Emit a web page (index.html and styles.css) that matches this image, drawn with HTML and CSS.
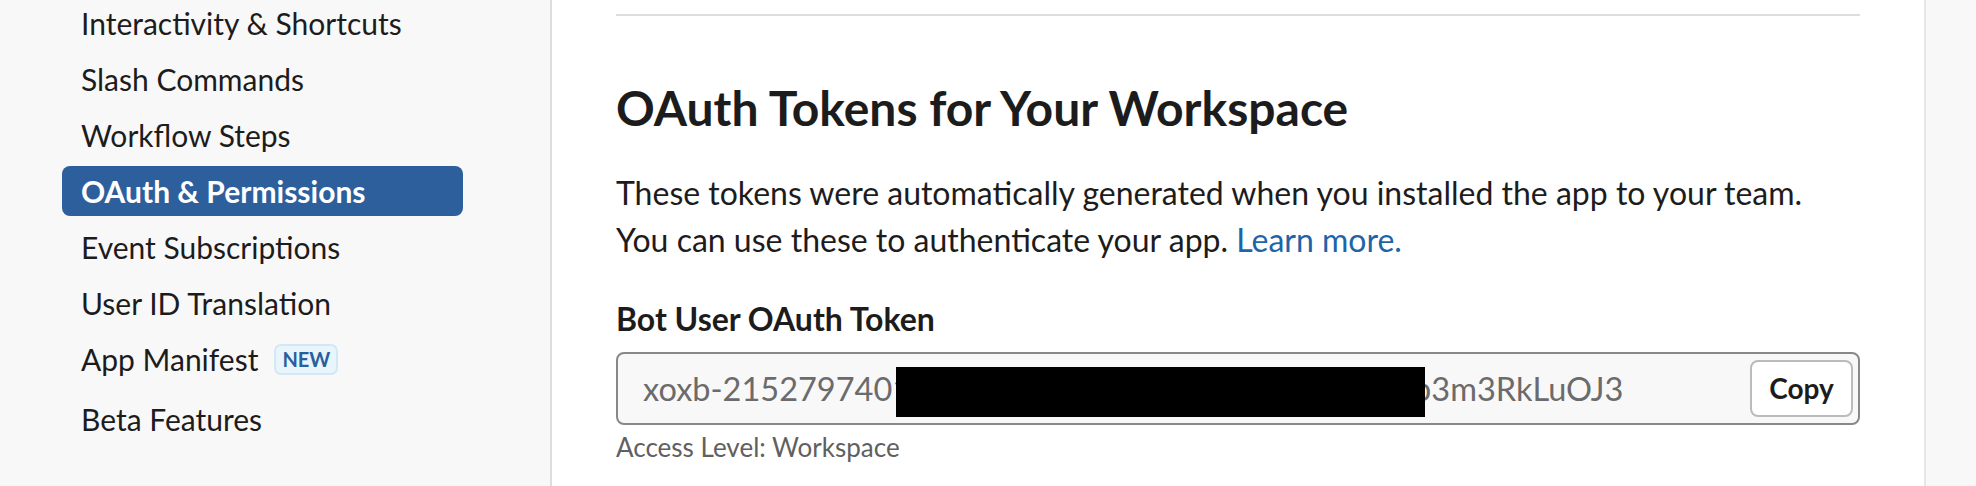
FILE: index.html
```html
<!DOCTYPE html>
<html lang="en">
<head>
  <meta charset="UTF-8" />
  <meta name="viewport" content="width=device-width, initial-scale=1.0"/>
  <title>OAuth &amp; Permissions</title>
  <link rel="stylesheet" href="styles.css">
</head>
<body>

  <div class="layout">
    <nav class="sidebar">
      <ul class="nav-list">
        <li><a href="#" class="nav-link">Interactivity &amp; Shortcuts</a></li>
        <li><a href="#" class="nav-link">Slash Commands</a></li>
        <li><a href="#" class="nav-link">Workflow Steps</a></li>
        <li><a href="#" class="nav-link active">OAuth &amp; Permissions</a></li>
        <li><a href="#" class="nav-link">Event Subscriptions</a></li>
        <li><a href="#" class="nav-link">User ID Translation</a></li>
        <li><a href="#" class="nav-link">App Manifest <span class="badge">NEW</span></a></li>
        <li class="nav-gap"><a href="#" class="nav-link">Beta Features</a></li>
      </ul>
    </nav>

    <main class="content">
      <hr class="divider" />

      <h2>OAuth Tokens for Your Workspace</h2>
      <p class="intro">
        These tokens were automatically generated when you installed the app to your team.<br>
        You can use these to authenticate your app. <a href="#">Learn more.</a>
      </p>

      <div class="token-block">
        <div class="token-label">Bot User OAuth Token</div>
        <div class="token-field">
          <div class="token-value">
            <span>xoxb-2152797401</span><span class="redacted"></span><span>b3m3RkLuOJ3</span>
          </div>
          <button class="copy-btn">Copy</button>
        </div>
        <div class="token-hint">Access Level: Workspace</div>
      </div>
    </main>

    <div class="gutter"></div>
  </div>

</body>
</html>
```

FILE: styles.css
```css
body {
  font-family: Lato, "Noto Sans", Arial, sans-serif;
  background-color: #f8f8f8;
  color: #1d1c1d;
  margin: 0;
  padding: 0;
  overflow: hidden;
}

.layout {
  display: flex;
  height: 486px;
}

/* left navigation */
.sidebar {
  width: 550px;
  background-color: #f8f8f8;
  border-right: 2px solid #dddddd;
}

.nav-list {
  list-style: none;
  margin: -2px 0 0;
  padding: 0 0 0 62px;
  width: 401px;
}

.nav-list li {
  margin-bottom: 6px;
}

.nav-list li.nav-gap {
  margin-top: 10px;
}

.nav-link {
  display: flex;
  align-items: center;
  height: 50px;
  padding: 0 19px;
  font-size: 30px;
  color: #1d1c1d;
  text-decoration: none;
  border-radius: 8px;
}

.nav-link.active {
  background-color: #2d5f9c;
  color: white;
  font-weight: bold;
}

.badge {
  display: inline-block;
  margin-left: 16px;
  padding: 0 6px;
  height: 27px;
  line-height: 27px;
  font-size: 20px;
  font-weight: bold;
  color: #2a5e9c;
  background-color: #e8f5fa;
  border: 2px solid #d3e8f4;
  border-radius: 7px;
}

/* main panel */
.content {
  width: 1244px;
  padding: 0 64px;
  background-color: white;
  border-right: 2px solid #e6e6e6;
}

.divider {
  margin: 14px 0 0;
  border: none;
  height: 2px;
  background-color: #dddddd;
}

h2 {
  margin: 63px 0 0;
  font-size: 48px;
  line-height: 1.2;
  font-weight: bold;
}

.intro {
  margin: 32px 0 0;
  font-size: 32px;
  line-height: 47px;
}

.intro a {
  color: #1d64a8;
  text-decoration: none;
}

.token-block {
  margin-top: 38px;
}

.token-label {
  font-size: 32px;
  line-height: 36px;
  font-weight: bold;
}

.token-field {
  display: flex;
  align-items: center;
  margin-top: 15px;
  height: 69px;
  padding: 0 5px 0 25px;
  background-color: #f8f8f8;
  border: 2px solid #888888;
  border-radius: 8px;
}

.token-value {
  flex: 1;
  display: flex;
  align-items: center;
  white-space: nowrap;
  font-size: 32.5px;
  color: #6b6b6b;
}

.redacted {
  display: inline-block;
  position: relative;
  z-index: 1;
  width: 529px;
  height: 50px;
  margin: 7px -12px 0 -15px;
  background-color: black;
}

.copy-btn {
  width: 103px;
  height: 57px;
  font-family: inherit;
  font-size: 28px;
  font-weight: bold;
  color: #1d1c1d;
  background-color: white;
  border: 2px solid #bbbbbb;
  border-radius: 8px;
  cursor: pointer;
}

.token-hint {
  margin-top: 7px;
  font-size: 26px;
  line-height: 30px;
  color: #616061;
}

.gutter {
  flex: 1;
  background-color: #f8f8f8;
}
```
